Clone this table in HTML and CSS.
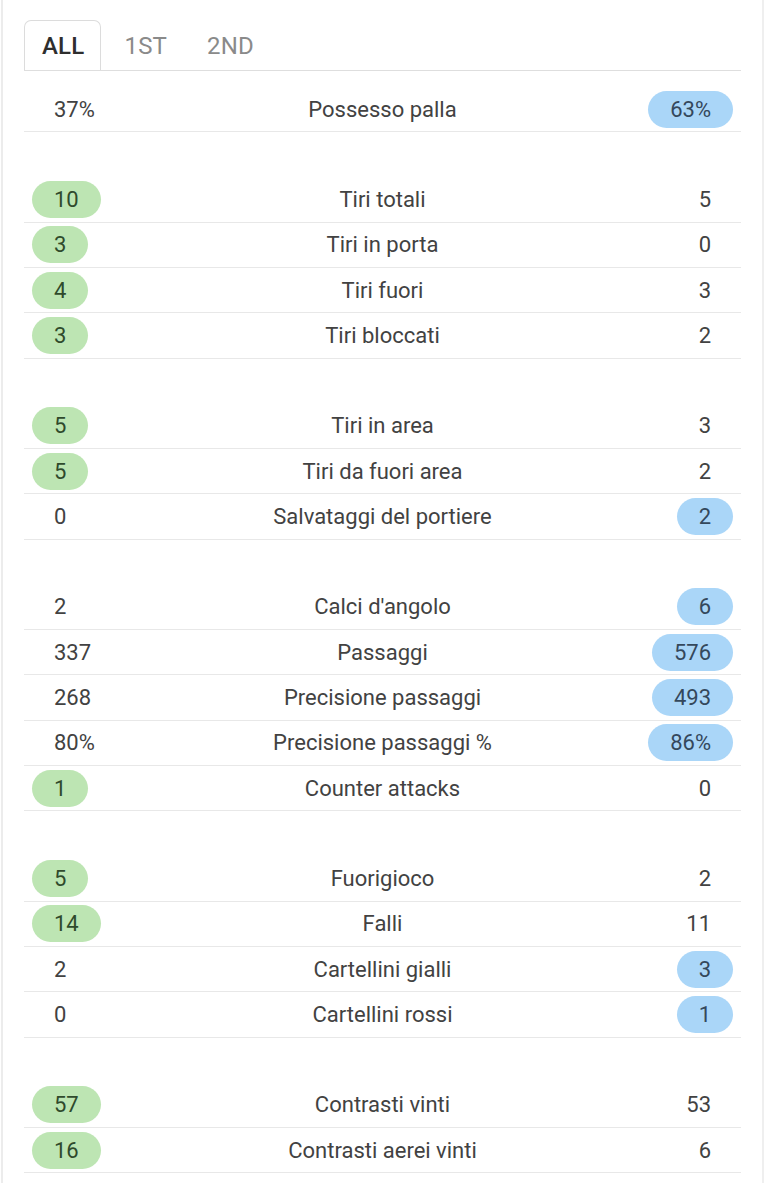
FILE: index.html
```html
<!DOCTYPE html>
<html lang="it">
<head>
<meta charset="utf-8">
<title>Statistiche</title>
<link rel="stylesheet" href="styles.css">
</head>
<body>
<div class="frame">
  <div class="tabs">
    <div class="tab active">ALL</div>
    <div class="tab">1ST</div>
    <div class="tab">2ND</div>
  </div>
  <div class="stats">
    <div class="group">
      <div class="row"><span class="val">37%</span><span class="label">Possesso palla</span><span class="val right blue">63%</span></div>
    </div>
    <div class="group">
      <div class="row"><span class="val green">10</span><span class="label">Tiri totali</span><span class="val right">5</span></div>
      <div class="row"><span class="val green">3</span><span class="label">Tiri in porta</span><span class="val right">0</span></div>
      <div class="row"><span class="val green">4</span><span class="label">Tiri fuori</span><span class="val right">3</span></div>
      <div class="row"><span class="val green">3</span><span class="label">Tiri bloccati</span><span class="val right">2</span></div>
    </div>
    <div class="group">
      <div class="row"><span class="val green">5</span><span class="label">Tiri in area</span><span class="val right">3</span></div>
      <div class="row"><span class="val green">5</span><span class="label">Tiri da fuori area</span><span class="val right">2</span></div>
      <div class="row"><span class="val">0</span><span class="label">Salvataggi del portiere</span><span class="val right blue">2</span></div>
    </div>
    <div class="group">
      <div class="row"><span class="val">2</span><span class="label">Calci d'angolo</span><span class="val right blue">6</span></div>
      <div class="row"><span class="val">337</span><span class="label">Passaggi</span><span class="val right blue">576</span></div>
      <div class="row"><span class="val">268</span><span class="label">Precisione passaggi</span><span class="val right blue">493</span></div>
      <div class="row"><span class="val">80%</span><span class="label">Precisione passaggi %</span><span class="val right blue">86%</span></div>
      <div class="row"><span class="val green">1</span><span class="label">Counter attacks</span><span class="val right">0</span></div>
    </div>
    <div class="group">
      <div class="row"><span class="val green">5</span><span class="label">Fuorigioco</span><span class="val right">2</span></div>
      <div class="row"><span class="val green">14</span><span class="label">Falli</span><span class="val right">11</span></div>
      <div class="row"><span class="val">2</span><span class="label">Cartellini gialli</span><span class="val right blue">3</span></div>
      <div class="row"><span class="val">0</span><span class="label">Cartellini rossi</span><span class="val right blue">1</span></div>
    </div>
    <div class="group">
      <div class="row"><span class="val green">57</span><span class="label">Contrasti vinti</span><span class="val right">53</span></div>
      <div class="row"><span class="val green">16</span><span class="label">Contrasti aerei vinti</span><span class="val right">6</span></div>
    </div>
  </div>
</div>
</body>
</html>
```

FILE: styles.css
```css
html, body {
  margin: 0;
  padding: 0;
  background: #ffffff;
}

body {
  font-family: Roboto, "Noto Sans", "Liberation Sans", sans-serif;
  color: #444444;
  font-size: 22px;
}

.frame {
  margin: 0 3px 0 1px;
  border-left: 2px solid #ececec;
  border-right: 2px solid #efefef;
  min-height: 1183px;
  padding: 0 21px 0 21px;
  box-sizing: border-box;
}

.tabs {
  display: flex;
  gap: 5px;
  padding-top: 20px;
  border-bottom: 1px solid #dedede;
}

.tab {
  height: 50px;
  box-sizing: border-box;
  padding: 0 16px 0 17px;
  display: flex;
  align-items: center;
  border: 1px solid transparent;
  border-bottom: none;
  color: #8a8a8a;
  font-size: 24px;
  letter-spacing: 0.2px;
}

.tab.active {
  border-color: #dcdcdc;
  border-radius: 7px 7px 0 0;
  background: #ffffff;
  color: #2e2e2e;
  font-weight: 500;
  margin-bottom: -1px;
}

.stats {
  padding-top: 16px;
}

.group {
  margin-bottom: 44.8px;
}

.row {
  display: grid;
  grid-template-columns: 1fr auto 1fr;
  align-items: center;
  height: 45.4px;
  box-sizing: border-box;
  padding: 0 8px;
  border-bottom: 1px solid #e8e8e8;
}

.label {
  text-align: center;
  color: #424242;
  white-space: nowrap;
}

.val {
  justify-self: start;
  display: inline-block;
  height: 37px;
  line-height: 37px;
  padding: 0 22px;
  border-radius: 19px;
  color: #424242;
}

.val.right {
  justify-self: end;
}

.val.green {
  background: #bde5b3;
  color: #2f4a2c;
}

.val.blue {
  background: #aad6f8;
  color: #34485c;
}
```
